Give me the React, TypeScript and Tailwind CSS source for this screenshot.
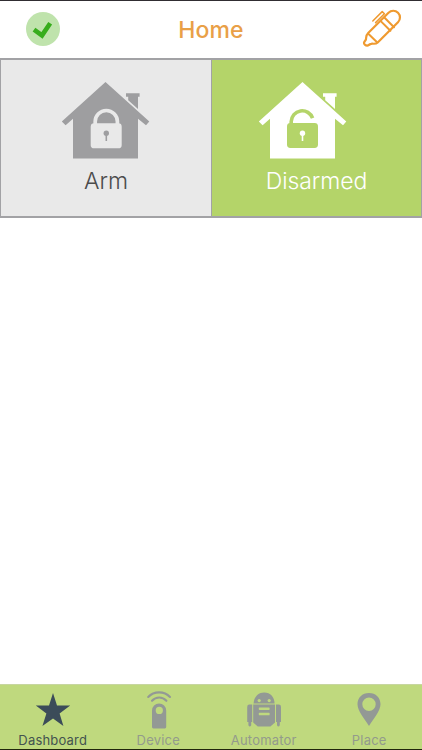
type HouseProps = { locked: boolean; color: string; background: string };

function House({ locked, color, background }: HouseProps) {
  return (
    <svg width="90" height="78" viewBox="0 0 90 78" aria-hidden="true">
      <path d="M44.5 1 88.3 40.4 85 44.2 77 37.8V77.6H12V37.8L4.6 44.2.8 40.4Z" fill={color} />
      <path d="M65 12.3H78.6V15.7H77V28L67.2 19.3V15.7H65Z" fill={color} />
      {locked ? (
        <>
          <path d="M34.2 44V40.6a11.1 11.1 0 0 1 22.2 0V44" fill="none" stroke={background} strokeWidth="3.7" />
          <rect x="29.7" y="42.3" width="31" height="25" rx="3.4" fill={background} />
        </>
      ) : (
        <>
          <path d="M33.2 44V40.6a11 11 0 0 1 21.4-3.4" fill="none" stroke={background} strokeWidth="3.6" />
          <rect x="29" y="42" width="31" height="25" rx="3.4" fill={background} />
        </>
      )}
      <circle cx={locked ? 45.3 : 44.5} cy="52.2" r="2.7" fill={color} />
      <path d={locked ? 'M45.3 53V60' : 'M44.5 53V60'} stroke={color} strokeWidth="1.6" />
    </svg>
  );
}

function CheckIcon() {
  return (
    <svg width="34" height="34" viewBox="0 0 34 34" aria-hidden="true">
      <circle cx="17" cy="17" r="17" fill="#bfe3ac" />
      <path d="M8 17.6 16 23.4 24.2 11.2" fill="none" stroke="#37ad1c" strokeWidth="4.6" />
    </svg>
  );
}

function PenIcon() {
  return (
    <svg className="overflow-visible" width="40" height="40" viewBox="0 0 40 40" fill="none" stroke="#ef9a30" strokeWidth="2.2" strokeLinecap="round" strokeLinejoin="round" aria-hidden="true">
      <path d="M7.2 23 27.5 2.7a6.7 6.7 0 0 1 9.5 9.5L16.7 32.5C14.6 34.6 12.4 33.4 10.2 33.8 8.6 34 7.6 35.6 6.2 35.6 4.4 35.6 2.8 34 3 32.8 3.2 31.4 4.8 30.6 5 29 5.3 27 4.8 25.4 7.2 23Z" />
      <path d="M7.8 24.2 15.8 32M20 11.4 29.4 20.8M23.6 7.8 33 17.2" strokeWidth="2" />
      <path d="M11.8 11 21.2 1.6 23.4 3.8 14.6 12.6" strokeWidth="1.5" />
    </svg>
  );
}

function StarIcon() {
  return (
    <svg width="36" height="36" viewBox="0 0 36 36" fill="#3b4c59" aria-hidden="true">
      <path d="M18 1 22 13.4H35.2L24.6 21.4 28.4 34 18 26.6 7.4 34 11.4 21.4.8 13.4H14Z" />
    </svg>
  );
}

function RemoteIcon() {
  return (
    <svg width="36" height="40" viewBox="0 0 36 40" aria-hidden="true">
      <path d="M8.2 7C14 .8 24.2.8 30 7M12 10.8C16 6.4 22.4 6.4 26.4 10.8" fill="none" stroke="#939995" strokeWidth="2.1" strokeLinecap="round" />
      <path fillRule="evenodd" d="M12 20.6a7.1 7.1 0 0 1 14.2 0V37a1.4 1.4 0 0 1-1.4 1.4H13.4A1.4 1.4 0 0 1 12 37ZM19.3 16.8a3.6 3.6 0 1 0 0 7.2 3.6 3.6 0 0 0 0-7.2Z" fill="#939995" />
    </svg>
  );
}

function RobotIcon() {
  return (
    <svg width="36" height="38" viewBox="0 0 36 38" fill="#939995" aria-hidden="true">
      <path d="M7.6 12.6C8 5.8 12 1.4 18.2 1.4s10.2 4.4 10.4 11.2Z" />
      <path d="M7.2 13.6H29V31.6L24.4 35.4H11.8L7.2 31.6Z" />
      <path d="M6.2 13.6H3.4A2.3 2.3 0 0 0 1.2 15.9V31H2.4V34.2Q3.8 36.6 5.2 34.2V31H6.2ZM30 13.6H32.8A2.3 2.3 0 0 1 35 15.9V31H33.8V34.2Q32.4 36.6 31 34.2V31H30Z" />
      <g fill="#bfd97e">
        <circle cx="13.2" cy="9.6" r="1.6" />
        <circle cx="23.2" cy="9.6" r="1.6" />
        <rect x="12.8" y="16.4" width="10.8" height="2.5" rx=".6" />
        <rect x="12.8" y="21.8" width="10.8" height="2.5" rx=".6" />
      </g>
    </svg>
  );
}

function PinIcon() {
  return (
    <svg width="26" height="36" viewBox="0 0 26 36" aria-hidden="true">
      <path fillRule="evenodd" d="M13 1C6.2 1 1.5 5.8 1.5 12.2 1.5 19 8.6 26.8 13 34 17.4 26.8 24.5 19 24.5 12.2 24.5 5.8 19.8 1 13 1ZM13 5.6a6.7 6.7 0 1 1 0 13.4 6.7 6.7 0 0 1 0-13.4Z" fill="#939995" />
    </svg>
  );
}

const tabs = [
  { label: 'Dashboard', icon: <StarIcon />, active: true },
  { label: 'Device', icon: <RemoteIcon />, active: false },
  { label: 'Automator', icon: <RobotIcon />, active: false },
  { label: 'Place', icon: <PinIcon />, active: false },
];

function App() {
  return (
    <div className="flex h-[750px] w-[422px] flex-col overflow-hidden bg-white font-['Inter',sans-serif]">
      <header className="grid h-[58px] shrink-0 grid-cols-3 items-center border-t border-[#302d32] px-[21px]">
        <button className="ml-[5px] w-[34px] pb-0.5" aria-label="Status">
          <CheckIcon />
        </button>
        <h1 className="pt-px text-center text-[23px] font-medium leading-7 tracking-[0.1px] text-[#e9a047]">Home</h1>
        <button className="w-10 justify-self-end" aria-label="Edit">
          <PenIcon />
        </button>
      </header>

      <section className="grid h-[160px] shrink-0 grid-cols-[211px_211px] border-t-2 border-b-2 border-[#a2a2a5]">
        <button className="flex flex-col items-center border-l border-[#a2a2a5] bg-[#e9e9e9] pt-[21px]">
          <House locked color="#9e9ea0" background="#e9e9e9" />
          <span className="mt-[6px] text-[23px] leading-8 text-[#4c4c4c] font-light">Arm</span>
        </button>
        <button className="flex flex-col items-center border-x border-[#a2a2a5] bg-[#b4d469] pt-[21px]">
          <span className="mr-[27px]">
            <House locked={false} color="#ffffff" background="#b4d469" />
          </span>
          <span className="mt-[6px] text-[23px] leading-8 text-white font-light tracking-[-0.1px]">Disarmed</span>
        </button>
      </section>

      <main className="flex-1" />

      <nav className="grid h-[66px] shrink-0 grid-cols-4 border-t border-b border-t-[#c7d6a0] border-b-[#20260c] bg-[#bfd97e]">
        {tabs.map((tab) => (
          <button key={tab.label} className="flex flex-col items-center">
            <span className="flex h-[46px] items-center pt-[3px]">{tab.icon}</span>
            <span className={`text-[13px] leading-[18px] tracking-[0.2px] ${tab.active ? 'text-[#43534f]' : 'text-[#939b8c]'}`}>
              {tab.label}
            </span>
          </button>
        ))}
      </nav>
    </div>
  );
}

export default App;
